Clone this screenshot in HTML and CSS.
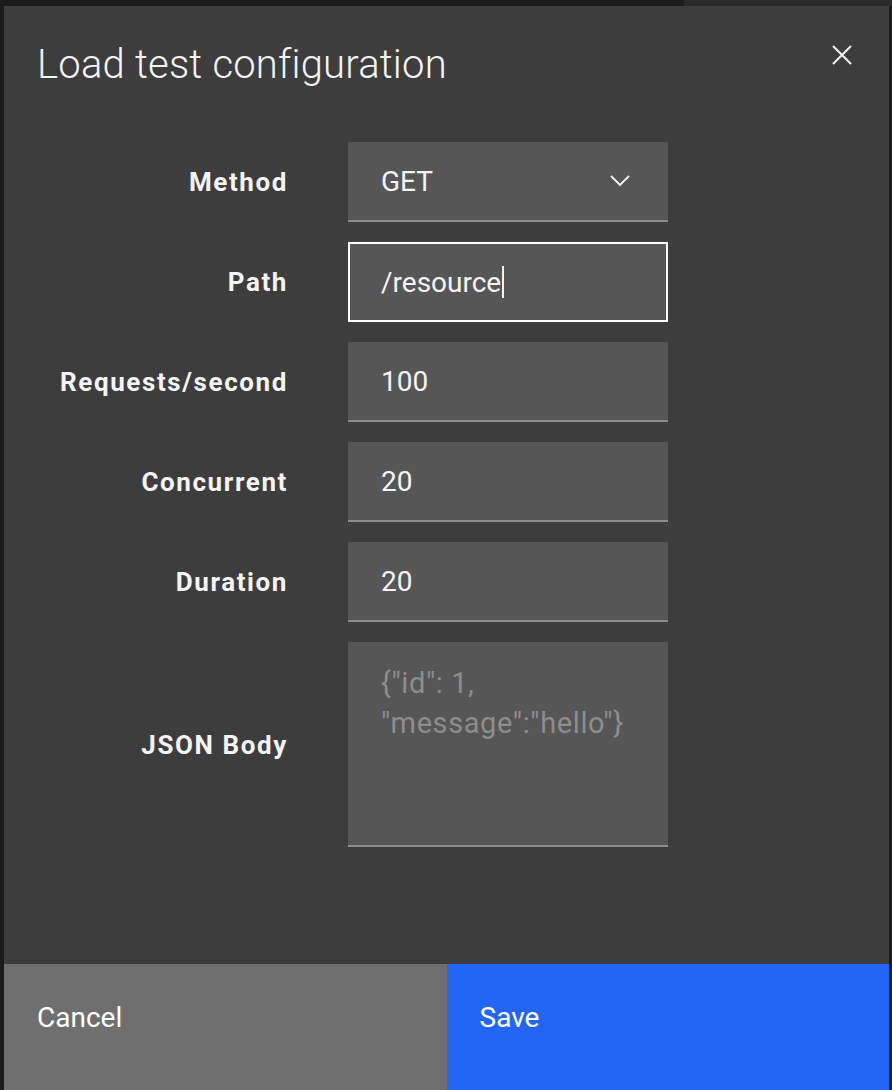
FILE: index.html
```html
<!DOCTYPE html>
<html lang="en">
<head>
<meta charset="utf-8">
<title>Load test configuration</title>
<link rel="stylesheet" href="styles.css">
</head>
<body>
<div class="backdrop">
  <div class="modal">
    <div class="modal-header">
      <h2 class="modal-title">Load test configuration</h2>
      <button class="close" aria-label="Close">
        <svg width="20" height="20" viewBox="0 0 20 20"><path d="M1 1 L19 19 M19 1 L1 19" stroke="#f4f4f4" stroke-width="2" fill="none"/></svg>
      </button>
    </div>
    <form class="form">
      <label class="label">Method</label>
      <div class="field select">
        <span class="value">GET</span>
        <svg class="chevron" width="20" height="12" viewBox="0 0 20 12"><path d="M1 1 L10 10 L19 1" stroke="#f4f4f4" stroke-width="1.8" fill="none"/></svg>
      </div>

      <label class="label">Path</label>
      <div class="field focused"><span class="value">/resource</span><span class="caret"></span></div>

      <label class="label">Requests/second</label>
      <div class="field"><span class="value">100</span></div>

      <label class="label">Concurrent</label>
      <div class="field"><span class="value">20</span></div>

      <label class="label">Duration</label>
      <div class="field"><span class="value">20</span></div>

      <label class="label">JSON Body</label>
      <div class="field textarea"><span class="placeholder">{"id": 1,<br>"message":"hello"}</span></div>
    </form>
    <div class="spacer"></div>
    <div class="footer">
      <button class="btn secondary">Cancel</button>
      <button class="btn primary">Save</button>
    </div>
  </div>
</div>
</body>
</html>
```

FILE: styles.css
```css
* { box-sizing: border-box; }
html, body { margin: 0; padding: 0; height: 100%; }
body {
  background: linear-gradient(to right, #1b1b1b 0, #1b1b1b 684px, #2a2a2a 684px, #2a2a2a 100%) top / 100% 6px no-repeat, #1c1c1c;
  font-family: Roboto, "Liberation Sans", sans-serif;
  color: #f4f4f4;
  overflow: hidden;
}
.backdrop {
  padding: 6px 3px 0 4px;
  height: 100%;
}
.modal {
  background: #3d3d3d;
  height: 1084px;
  display: flex;
  flex-direction: column;
}
.modal-header {
  display: flex;
  justify-content: space-between;
  align-items: flex-start;
  padding: 35px 37px 0 33px;
}
.modal-title {
  margin: 0;
  font-weight: 300;
  font-size: 40px;
  line-height: 48px;
  letter-spacing: 0.2px;
  color: #f4f4f4;
}
.close {
  background: none;
  border: 0;
  padding: 0;
  margin-top: 4px;
  width: 20px;
  height: 20px;
  cursor: pointer;
}
.close svg { display: block; }
.form {
  display: grid;
  grid-template-columns: 284px 320px;
  column-gap: 60px;
  row-gap: 20px;
  margin-top: 53px;
}
.label {
  justify-self: end;
  align-self: center;
  font-weight: 700;
  font-size: 26px;
  letter-spacing: 1.6px;
  color: #f4f4f4;
}
.field {
  height: 80px;
  background: #565656;
  border-bottom: 2px solid #8d8d8d;
  display: flex;
  align-items: center;
  padding: 0 33px;
  font-size: 28px;
  color: #f4f4f4;
}
.select { justify-content: space-between; padding-right: 38px; }
.chevron { display: block; }
.focused {
  border: 2px solid #ffffff;
  padding-left: 31px;
}
.caret {
  display: inline-block;
  width: 2px;
  height: 32px;
  background: #f4f4f4;
  margin-left: 1px;
}
.textarea {
  height: 205px;
  align-items: flex-start;
  padding-top: 21px;
}
.placeholder {
  color: #8d8d8d;
  line-height: 40px;
  font-size: 29px;
  letter-spacing: 0.6px;
}
.spacer { flex: 1; }
.footer {
  display: flex;
  height: 126px;
}
.btn {
  flex: 1;
  border: 0;
  margin: 0;
  text-align: left;
  padding: 0 33px 20px;
  font-family: Roboto, "Liberation Sans", sans-serif;
  font-size: 28px;
  color: #ffffff;
  cursor: pointer;
}
.secondary { background: #6f6f6f; }
.primary { background: #2366f5; }
```
